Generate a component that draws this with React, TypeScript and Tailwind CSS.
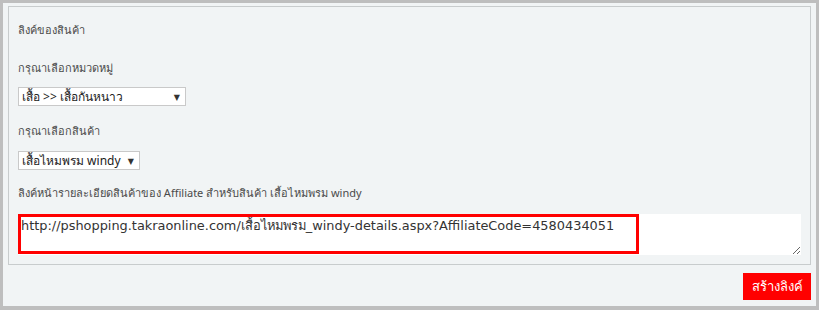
import * as React from "react";

const thai = { fontFamily: '"Noto Sans", "DejaVu Sans", sans-serif' };

function Select({ value, width }: { value: string; width: string }) {
  return (
    <div className={`flex items-center justify-between h-[19px] ${width} bg-white border border-[#c9c9c9] pl-[3px] pr-[5px] text-[12px] text-[#222] leading-none whitespace-nowrap`}>
      <span>{value}</span>
      <span className="text-[8px] text-[#333]">▼</span>
    </div>
  );
}

export default function App() {
  return (
    <div className="w-[819px] h-[310px] bg-[#bebebe] pt-[3px] pl-[3px] pr-[3px] pb-[4px]" style={thai}>
      <div className="h-full bg-[#f1f4f5] px-[5px] pt-[3px] flex flex-col">
        <div className="border border-[#c8cccd] h-[259px] shrink-0 px-[9px] pt-[14px] text-[11px] text-[#4a4a4a]">
          <div className="leading-[18px]">ลิงค์ของสินค้า</div>
          <div className="mt-[20px] leading-[18px]">กรุณาเลือกหมวดหมู่</div>
          <div className="mt-[10px]">
            <Select value="เสื้อ >> เสื้อกันหนาว" width="w-[168px]" />
          </div>
          <div className="mt-[16px] leading-[18px]">กรุณาเลือกสินค้า</div>
          <div className="mt-[11px]">
            <Select value="เสื้อไหมพรม windy" width="w-[122px]" />
          </div>
          <div className="mt-[14px] leading-[18px]">ลิงค์หน้ารายละเอียดสินค้าของ Affiliate สำหรับสินค้า เสื้อไหมพรม windy</div>
          <div className="relative mt-[12px] h-[41px] bg-white">
            <textarea
              readOnly
              className="w-full h-full resize-y bg-white outline-none px-[3px] pt-[4px] text-[12.9px] text-[#333] leading-[16px]"
              style={{ fontFamily: '"DejaVu Sans", "Noto Sans", sans-serif' }}
              defaultValue="http://pshopping.takraonline.com/เสื้อไหมพรม_windy-details.aspx?AffiliateCode=4580434051"
            />
            <div className="absolute left-0 top-0 w-[621px] h-[40px] border-[3px] border-[#ff0000] pointer-events-none" />
          </div>
        </div>
        <div className="flex justify-end pt-[8px]">
          <button className="w-[68px] h-[27px] bg-[#ff0000] text-white text-[13px]">สร้างลิงค์</button>
        </div>
      </div>
    </div>
  );
}
